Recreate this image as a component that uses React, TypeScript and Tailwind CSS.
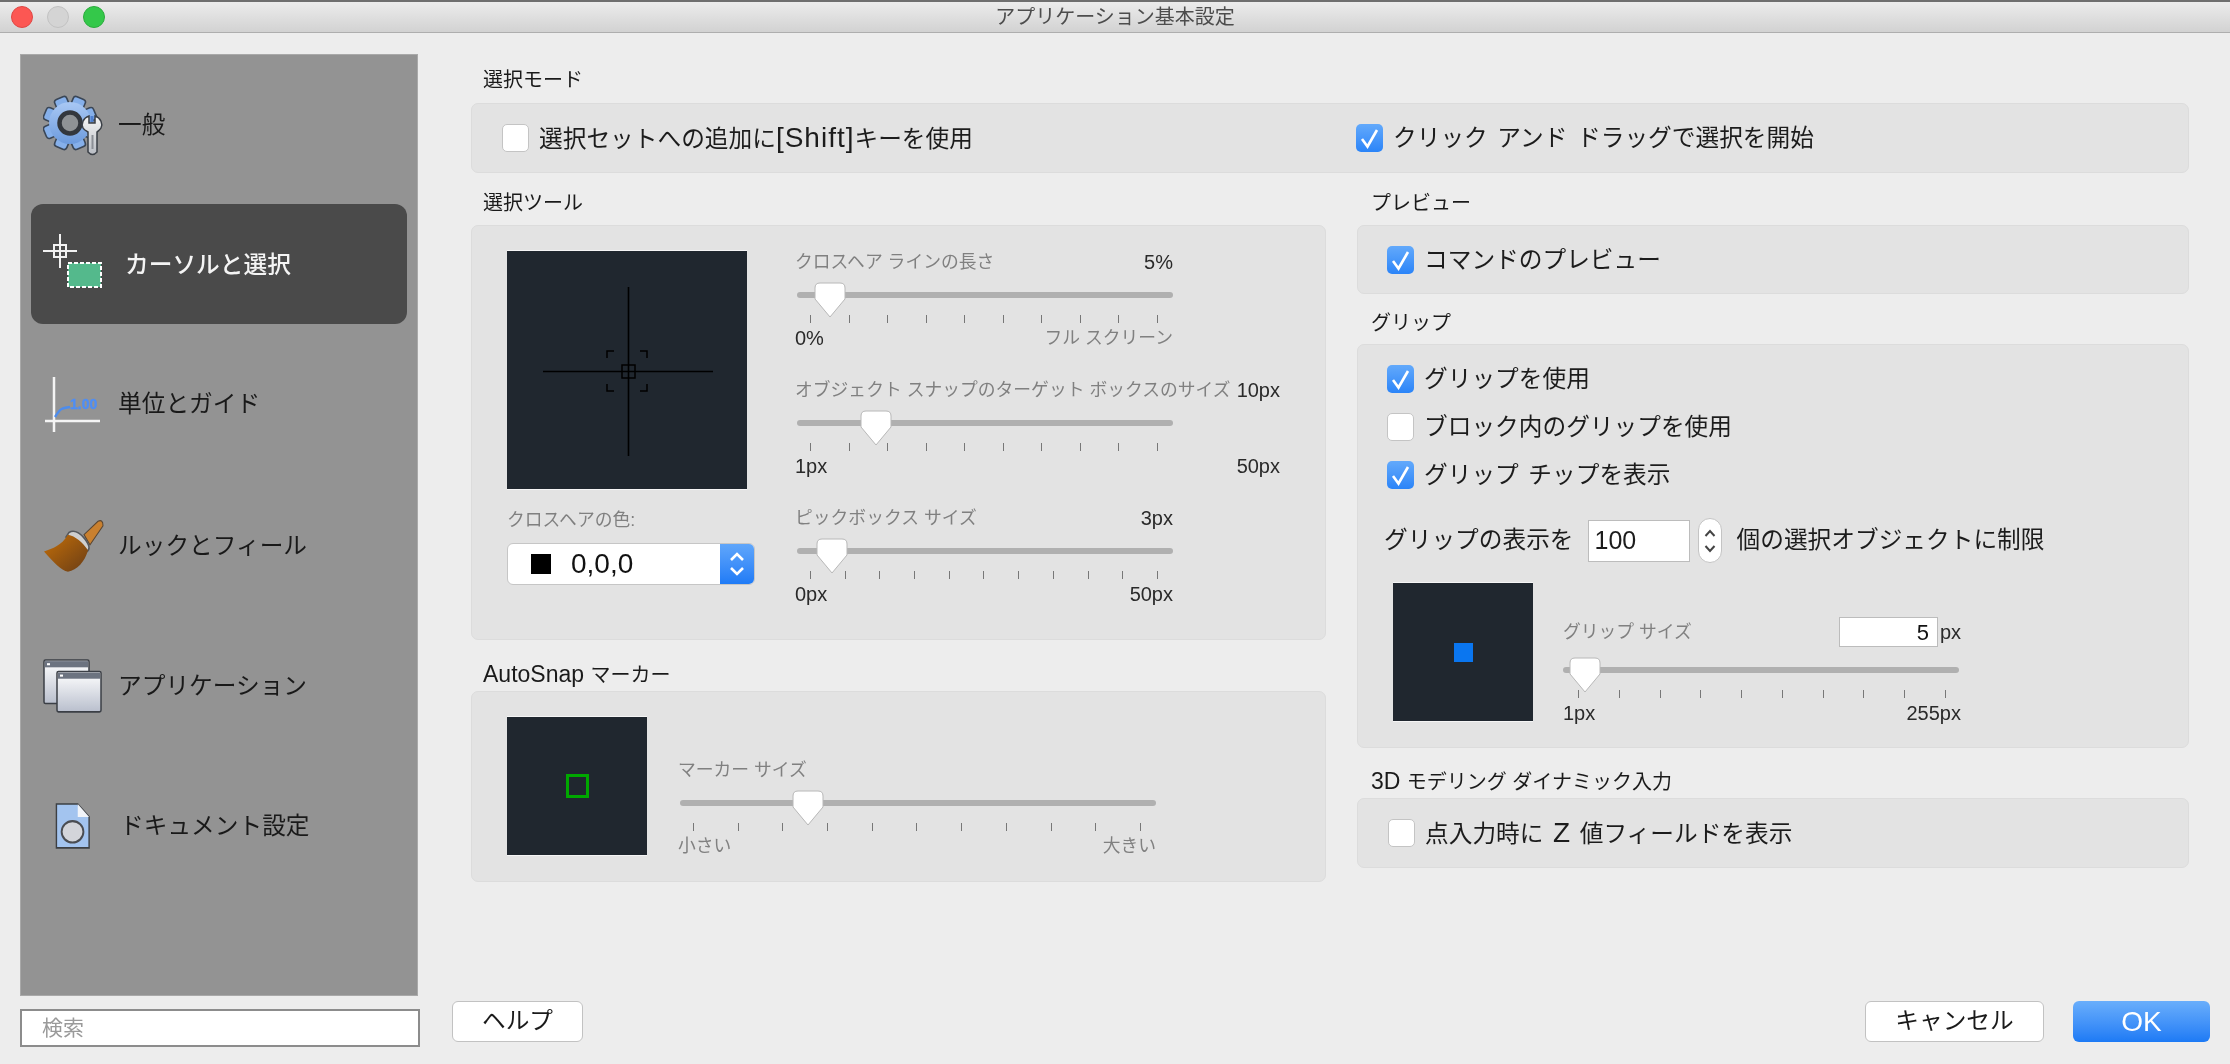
import React from "react";

const FONT = '"Liberation Sans","Noto Sans CJK JP",sans-serif';

function Check({ on, children }: { on?: boolean; children: React.ReactNode }) {
  return (
    <div className="flex items-center gap-[10px] h-[28px]">
      {on ? (
        <div className="w-[27px] h-[28px] rounded-[5px] bg-gradient-to-b from-[#62a9fb] to-[#2a84f8] flex items-center justify-center">
          <svg width="27" height="28" viewBox="0 0 27 28" fill="none">
            <path d="M6 15 L11.5 22.5 L21 6" stroke="#fff" strokeWidth="2.6" />
          </svg>
        </div>
      ) : (
        <div className="w-[27px] h-[28px] rounded-[5px] bg-white border border-[#c4c4c4]" />
      )}
      <span className="text-[23.7px] leading-[28px] text-[#1c1c1c] whitespace-pre [word-spacing:3px]">{children}</span>
    </div>
  );
}

function Thumb({ left }: { left: number }) {
  return (
    <svg className="absolute top-[-10px]" style={{ left: left - 16 }} width="32" height="36" viewBox="0 0 32 36">
      <path d="M6 1 H26 Q31 1 31 6 V17 L16 35 L1 17 V6 Q1 1 6 1 Z" fill="#fff" stroke="#b8b8b8" strokeWidth="1" />
    </svg>
  );
}

function Ticks({ n }: { n: number }) {
  return (
    <div className="flex justify-between px-[15px] mt-[17px]">
      {Array.from({ length: n }).map((_, i) => (
        <div key={i} className="w-[1px] h-[8px] bg-[#777777]" />
      ))}
    </div>
  );
}

function Slider({
  label,
  value,
  min,
  max,
  thumb,
  ticks,
  rowW,
  trackW,
  minGray,
  maxGray,
}: {
  label: string;
  value?: React.ReactNode;
  min: string;
  max: string;
  thumb: number;
  ticks: number;
  rowW: number;
  trackW: number;
  minGray?: boolean;
  maxGray?: boolean;
}) {
  return (
    <div style={{ width: rowW }}>
      <div className="flex justify-between items-center h-[24px] whitespace-pre">
        <span className="text-[17.8px] text-[#808080]">{label}</span>
        {value != null && <span className="text-[20px] text-[#2a2a2a]">{value}</span>}
      </div>
      <div style={{ width: trackW }}>
        <div className="relative h-[6px] mt-[18px] ml-[2px] rounded-[3px] bg-[#b0b0b0]">
          <Thumb left={thumb} />
        </div>
        <Ticks n={ticks} />
      </div>
      <div className="flex justify-between items-center h-[24px] mt-[3px] whitespace-pre">
        <span className={minGray ? "text-[17.8px] text-[#808080]" : "text-[20px] text-[#2a2a2a]"}>{min}</span>
        <span className={maxGray ? "text-[17.8px] text-[#808080]" : "text-[20px] text-[#2a2a2a]"}>{max}</span>
      </div>
    </div>
  );
}

function Heading({ children, cls }: { children: React.ReactNode; cls: string }) {
  return <div className={"flex items-center text-[20px] text-[#1a1a1a] whitespace-pre " + cls}><span>{children}</span></div>;
}

const panel = "bg-[#e3e3e3] border border-[#dcdcdc] rounded-[7px]";

function GearIcon() {
  const teeth = Array.from({ length: 8 }).map((_, i) => (
    <rect key={i} x="20.5" y="1" width="13" height="14" rx="3" transform={`rotate(${i * 45 + 22.5} 27 28)`} fill="#86b0ea" stroke="#3a4656" strokeWidth="1.6" />
  ));
  return (
    <svg width="62" height="62" viewBox="0 0 62 62">
      <defs>
        <linearGradient id="gearG" x1="0" y1="0" x2="0" y2="1">
          <stop offset="0" stopColor="#a9c8f4" />
          <stop offset="1" stopColor="#6d9bdd" />
        </linearGradient>
        <linearGradient id="wrG" x1="0" y1="0" x2="0" y2="1">
          <stop offset="0" stopColor="#f6f6f6" />
          <stop offset="1" stopColor="#b9bdc4" />
        </linearGradient>
      </defs>
      {teeth}
      <circle cx="27" cy="28" r="21" fill="url(#gearG)" />
      <circle cx="27" cy="28" r="10.5" fill="#8f9295" stroke="#33373d" strokeWidth="4.5" />
      <path d="M46 21 V28 H52 V21 C58 23 60 29 58 33 C57 35 55 36 54 37 V57 Q49.5 62 45 57 V37 C43 36 41 35 40 33 C38 29 40 23 46 21 Z" fill="url(#wrG)" stroke="#3a3f46" strokeWidth="1.5" />
      <rect x="48.5" y="40" width="2" height="14" fill="#8b8f96" />
      <rect x="47.5" y="21" width="3" height="6" fill="#4d7fd0" />
    </svg>
  );
}

function CursorIcon() {
  return (
    <svg width="62" height="58" viewBox="0 0 62 58" fill="none">
      <path d="M17 0 V34 M0 17 H34" stroke="#f2f2f2" strokeWidth="2" />
      <rect x="11" y="11" width="12" height="12" stroke="#f2f2f2" strokeWidth="2" />
      <rect x="25" y="29" width="33" height="24" fill="#54b98c" stroke="#fff" strokeWidth="2" strokeDasharray="4 2" />
    </svg>
  );
}

function UnitsIcon() {
  return (
    <svg width="58" height="56" viewBox="0 0 58 56" fill="none">
      <path d="M11 0 V55 M2 44 H57" stroke="#f4f4f4" strokeWidth="2.5" />
      <path d="M12 40 C17 32 18 31 27 30" stroke="#4d8cec" strokeWidth="2.4" />
      <text x="27" y="32" fontSize="14" fontWeight="700" fill="#4f8ef5" stroke="#4f8ef5" strokeWidth="0.4" fontFamily={FONT}>1.00</text>
    </svg>
  );
}

function BrushIcon() {
  return (
    <svg width="62" height="56" viewBox="0 0 62 50" preserveAspectRatio="none">
      <defs>
        <linearGradient id="brG" x1="0" y1="0" x2="1" y2="1">
          <stop offset="0" stopColor="#c46f08" />
          <stop offset="1" stopColor="#6a3d16" />
        </linearGradient>
      </defs>
      <path d="M41 14 L55 2 Q60 0 60 6 L47 23 Z" fill="#c9802f" stroke="#5a4632" strokeWidth="1" />
      <path d="M26 12 C30 10 36 11 42 18 C47 24 47 27 44 29 L23 16 Z" fill="#cfcfcf" stroke="#55585c" strokeWidth="1.5" />
      <path d="M25 14 C18 24 10 26 1 29 C10 38 18 46 25 47 C34 46 42 38 45 28 C40 21 32 15 25 14 Z" fill="url(#brG)" />
    </svg>
  );
}

function Win({ x, y, w, h }: { x: number; y: number; w: number; h: number }) {
  return (
    <g>
      <rect x={x} y={y} width={w} height={h} rx="1.5" fill="url(#wG)" stroke="#3b3f46" strokeWidth="1.5" />
      <rect x={x + 1} y={y + 1} width={w - 2} height="6" fill="#6c7380" />
      <rect x={x + 3} y={y + 3} width="3" height="2" fill="#fff" />
    </g>
  );
}

function WindowsIcon() {
  return (
    <svg width="60" height="58" viewBox="0 0 60 56" preserveAspectRatio="none">
      <defs>
        <linearGradient id="wG" x1="0" y1="0" x2="0" y2="1">
          <stop offset="0" stopColor="#ffffff" />
          <stop offset="1" stopColor="#b9bfcd" />
        </linearGradient>
      </defs>
      <Win x={1} y={2} w={45} h={42} />
      <Win x={14} y={13} w={44} h={39} />
    </svg>
  );
}

function DocIcon() {
  return (
    <svg width="36" height="47" viewBox="0 0 38 44" preserveAspectRatio="none">
      <path d="M1.5 1 H24 L36 13 V42 H1.5 Z" fill="#a3c4ef" stroke="#3d4044" strokeWidth="1.5" />
      <path d="M24 1 L36 13 H24 Z" fill="#f1f4f9" />
      <ellipse cx="18.5" cy="27" rx="11.5" ry="10" fill="#d3d5da" stroke="#4a4d52" strokeWidth="2" />
    </svg>
  );
}

function NavItem({ children, cls, active }: { children: React.ReactNode; cls: string; active?: boolean }) {
  return (
    <div
      className={
        "flex items-center text-[23.7px] whitespace-pre " +
        cls +
        (active ? " bg-[#4a4a4a] rounded-[12px] text-[#f4f4f4] font-medium" : " text-[#191919]")
      }
    >
      {children}
    </div>
  );
}

export default function App() {
  return (
    <div className="w-[2230px] h-[1064px] bg-[#ededed] flex flex-col overflow-hidden blur-[0.5px]" style={{ fontFamily: FONT }}>
      <div className="h-[33px] shrink-0 grid grid-cols-[1fr_auto_1fr] items-center border-b border-[#aeaeae] border-t-[2px] border-t-[#6f6f6f] bg-gradient-to-b from-[#ececec] to-[#d2d2d2]">
        <div className="flex items-center gap-[14px] pl-[11px]">
          <div className="w-[22px] h-[22px] rounded-full bg-[#fc5753] border border-[#df4744]" />
          <div className="w-[22px] h-[22px] rounded-full bg-[#d4d4d4] border border-[#c2c2c2]" />
          <div className="w-[22px] h-[22px] rounded-full bg-[#34c84a] border border-[#2aac3c]" />
        </div>
        <div className="text-[20px] text-[#4d4d4d]">アプリケーション基本設定</div>
        <div />
      </div>

      <div className="flex-1 flex">
        {/* left column */}
        <div className="w-[420px] shrink-0 pl-[20px] pt-[21px]">
          <div className="w-[398px] h-[942px] bg-[#939393] border border-[#a9a9a9] flex flex-col">
            <NavItem cls="h-[62px] mt-[40px] pl-[22px]"><GearIcon /><span className="ml-[13px]">一般</span></NavItem>
            <NavItem active cls="h-[120px] mt-[47px] mx-[10px] pl-[12px]"><div className="mt-[-2px]"><CursorIcon /></div><span className="ml-[20px] mt-[3px]">カーソルと選択</span></NavItem>
            <NavItem cls="h-[56px] mt-[53px] pl-[22px]"><UnitsIcon /><span className="ml-[17px]">単位とガイド</span></NavItem>
            <NavItem cls="h-[56px] mt-[86px] pl-[22px]"><BrushIcon /><span className="ml-[13px]">ルックとフィール</span></NavItem>
            <NavItem cls="h-[58px] mt-[83px] pl-[22px]"><WindowsIcon /><span className="ml-[15px]">アプリケーション</span></NavItem>
            <NavItem cls="h-[47px] mt-[87px] pl-[34px]"><DocIcon /><span className="ml-[29px]">ドキュメント設定</span></NavItem>
          </div>
          <div className="w-[400px] h-[38px] mt-[13px] bg-white border-[2px] border-[#8c8c8c] pl-[20px] flex items-center text-[21px] text-[#9a9a9a]">
            検索
          </div>
        </div>

        {/* right area */}
        <div className="flex-1 flex flex-col pl-[51px] pr-[41px]">
          <Heading cls="h-[46px] mt-[24px] pl-[12px]">選択モード</Heading>
          <div className={panel + " h-[70px] flex items-center"}>
            <div className="w-[884px] pl-[30px]">
              <Check>選択セットへの追加に<span className="text-[28px] tracking-[1px]">[Shift]</span>キーを使用</Check>
            </div>
            <Check on>クリック アンド ドラッグで選択を開始</Check>
          </div>

          <div className="flex gap-[31px] mt-[7px]">
            {/* left col */}
            <div className="w-[855px] shrink-0">
              <Heading cls="h-[45px] pl-[12px]">選択ツール</Heading>
              <div className={panel + " h-[415px] flex pl-[35px] pt-[24px]"}>
                <div className="w-[248px] shrink-0">
                  <div className="w-[240px] h-[240px] bg-[#20272f] relative border-y border-[#f5f5f5]">
                    <svg width="240" height="238" viewBox="0 0 240 238" fill="none">
                      <path d="M36 120.5 H206 M121.5 36 V205" stroke="#000" strokeWidth="1.6" />
                      <rect x="115" y="114" width="13" height="13" stroke="#000" strokeWidth="1.5" />
                      <path d="M100 107 V100 H107 M140 107 V100 H133 M100 133 V140 H107 M140 133 V140 H133" stroke="#000" strokeWidth="1.5" />
                    </svg>
                  </div>
                  <div className="mt-[18px] h-[24px] flex items-center text-[17.8px] text-[#808080]">クロスヘアの色:</div>
                  <div className="mt-[11px] h-[42px] rounded-[6px] flex overflow-hidden border border-[#c6c6c6] bg-white">
                    <div className="flex-1 flex items-center pl-[23px] gap-[20px] text-[28px] text-[#111]">
                      <div className="w-[20px] h-[20px] bg-black" />
                      <span>0,0,0</span>
                    </div>
                    <div className="w-[34px] bg-gradient-to-b from-[#5fa6fb] to-[#1f7bf6] flex items-center justify-center">
                      <svg width="20" height="30" viewBox="0 0 20 30" fill="none" stroke="#fff" strokeWidth="2.6">
                        <path d="M4 11 L10 5 L16 11 M4 19 L10 25 L16 19" />
                      </svg>
                    </div>
                  </div>
                </div>
                <div className="ml-[40px] flex flex-col">
                  <Slider label="クロスヘア ラインの長さ" value="5%" min="0%" max="フル スクリーン" maxGray thumb={33} ticks={10} rowW={378} trackW={378} />
                  <div className="mt-[28px]">
                    <Slider label="オブジェクト スナップのターゲット ボックスのサイズ" value="10px" min="1px" max="50px" thumb={79} ticks={10} rowW={485} trackW={378} />
                  </div>
                  <div className="mt-[28px]">
                    <Slider label="ピックボックス サイズ" value="3px" min="0px" max="50px" thumb={35} ticks={11} rowW={378} trackW={378} />
                  </div>
                </div>
              </div>

              <Heading cls="h-[34px] mt-[17px] pl-[12px]"><span className="text-[23px]">AutoSnap </span>マーカー</Heading>
              <div className={panel + " h-[191px] flex pl-[35px] pt-[24px]"}>
                <div className="w-[140px] h-[140px] bg-[#20272f] flex items-center justify-center border-y border-[#f5f5f5]">
                  <div className="w-[23px] h-[24px] border-[3px] border-[#00a800]" />
                </div>
                <div className="ml-[31px] pt-[42px]">
                  <Slider label="マーカー サイズ" min="小さい" max="大きい" minGray maxGray thumb={128} ticks={11} rowW={478} trackW={478} />
                </div>
              </div>
            </div>

            {/* right col */}
            <div className="flex-1">
              <Heading cls="h-[45px] pl-[14px]">プレビュー</Heading>
              <div className={panel + " h-[69px] flex items-center pl-[29px]"}>
                <Check on>コマンドのプレビュー</Check>
              </div>
              <Heading cls="h-[42px] mt-[8px] pl-[14px]">グリップ</Heading>
              <div className={panel + " h-[404px] pt-[20px]"}>
                <div className="pl-[29px] flex flex-col gap-[20px]">
                  <Check on>グリップを使用</Check>
                  <Check>ブロック内のグリップを使用</Check>
                  <Check on>グリップ チップを表示</Check>
                </div>
                <div className="flex items-center mt-[29px] pl-[26px] text-[23.7px] text-[#1c1c1c] h-[45px] whitespace-pre">
                  <span>グリップの表示を</span>
                  <div className="w-[102px] h-[42px] ml-[14px] bg-white border border-[#bcbcbc] flex items-center pl-[6px] text-[25px]">100</div>
                  <div className="w-[24px] h-[45px] ml-[8px] rounded-[12px] bg-white border border-[#c4c4c4] flex items-center justify-center">
                    <svg width="14" height="30" viewBox="0 0 14 30" fill="none" stroke="#444" strokeWidth="2">
                      <path d="M2.5 10 L7 5 L11.5 10 M2.5 20 L7 25 L11.5 20" />
                    </svg>
                  </div>
                  <span className="ml-[15px]">個の選択オブジェクトに制限</span>
                </div>
                <div className="flex pl-[35px] mt-[19px]">
                  <div className="w-[140px] h-[140px] bg-[#20272f] flex items-center justify-center border-y border-[#f5f5f5]">
                    <div className="w-[19px] h-[19px] bg-[#0a76f0]" />
                  </div>
                  <div className="ml-[30px] pt-[35px]">
                    <div className="w-[398px]">
                      <div className="flex items-center h-[30px] whitespace-pre">
                        <span className="text-[17.8px] text-[#808080]">グリップ サイズ</span>
                        <div className="ml-[auto] w-[99px] h-[30px] bg-white border border-[#bcbcbc] flex items-center justify-end pr-[8px] text-[22px] text-[#111]">5</div>
                        <span className="w-[21px] ml-[2px] text-[20px] text-[#2a2a2a] shrink-0">px</span>
                      </div>
                      <div className="relative h-[6px] mt-[20px] mr-[2px] rounded-[3px] bg-[#b0b0b0]">
                        <Thumb left={22} />
                      </div>
                      <Ticks n={10} />
                      <div className="flex justify-between items-center h-[24px] mt-[3px] text-[20px] text-[#2a2a2a]">
                        <span>1px</span>
                        <span>255px</span>
                      </div>
                    </div>
                  </div>
                </div>
              </div>
              <Heading cls="h-[34px] mt-[16px] pl-[14px]"><span className="text-[23px]">3D </span>モデリング ダイナミック入力</Heading>
              <div className={panel + " h-[70px] flex items-center pl-[30px]"}>
                <Check>点入力時に <span className="text-[28px]">Z</span> 値フィールドを表示</Check>
              </div>
            </div>
          </div>

          <div className="mt-auto mb-[22px] flex items-center ml-[-19px] mr-[-21px]">
            <div className="w-[131px] h-[41px] rounded-[6px] bg-white border border-[#c2c2c2] flex items-center justify-center text-[23.7px] text-[#1a1a1a]">ヘルプ</div>
            <div className="ml-auto w-[179px] h-[41px] rounded-[6px] bg-white border border-[#c2c2c2] flex items-center justify-center text-[23.7px] text-[#1a1a1a]">キャンセル</div>
            <div className="ml-[29px] w-[137px] h-[41px] rounded-[6px] bg-gradient-to-b from-[#69aefb] to-[#1c7af5] flex items-center justify-center text-[28px] text-white">OK</div>
          </div>
        </div>
      </div>
    </div>
  );
}
